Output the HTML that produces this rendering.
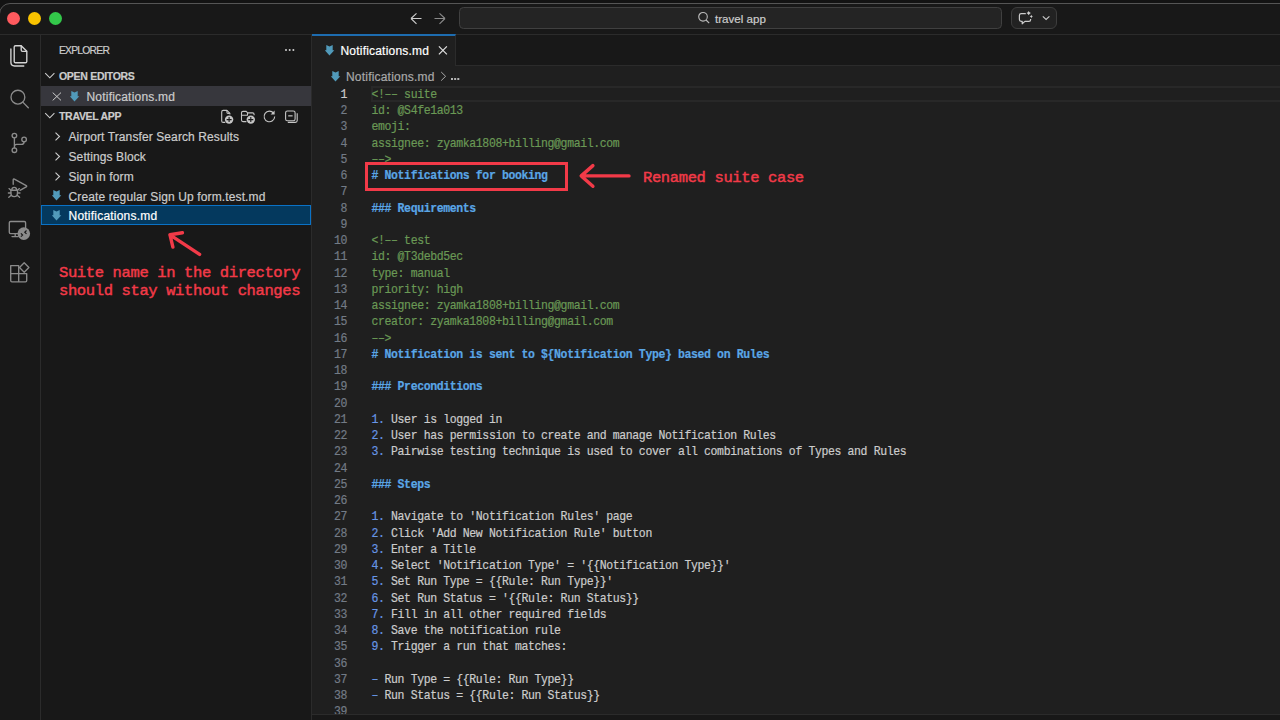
<!DOCTYPE html>
<html><head><meta charset="utf-8">
<style>
html,body{margin:0;padding:0;}
body{width:1280px;height:720px;overflow:hidden;position:relative;background:#131313;font-family:"Liberation Sans",sans-serif;}
.abs{position:absolute;}
svg{display:block;}
#win{position:absolute;left:-1px;top:3px;width:1300px;height:760px;background:#181818;border:1px solid #555555;border-radius:11px;box-sizing:border-box;}
.ln{position:absolute;left:300px;width:47.10px;text-align:right;font-family:"Liberation Mono",monospace;font-size:11.5px;letter-spacing:-0.380px;line-height:16.25px;color:#737b86;white-space:pre;-webkit-text-stroke:0.18px;transform:scaleY(1.07);transform-origin:0 11.19px;margin-top:0.81px;}
.ln.act{color:#cccccc;}
.cl{position:absolute;left:371.5px;font-family:"Liberation Mono",monospace;font-size:11.5px;letter-spacing:-0.380px;line-height:16.25px;color:#cccccc;white-space:pre;-webkit-text-stroke:0.18px;transform:scaleY(1.13);transform-origin:0 11.19px;margin-top:0.81px;}
.hd{color:#5aa6e6;font-weight:bold;}
.ui{position:absolute;white-space:nowrap;color:#cccccc;font-size:12px;line-height:20px;-webkit-text-stroke:0.2px;}
.ann{position:absolute;white-space:pre;font-family:"Liberation Mono",monospace;font-weight:normal;-webkit-text-stroke:0.45px #f23a48;color:#f23a48;font-size:15.5px;letter-spacing:-0.37px;}
</style></head><body>
<div id="win"></div>
<!-- title bar -->

<div class="abs" style="left:7.25px;top:11.6px;width:13px;height:13px;border-radius:50%;background:#ff5a5e"></div>
<div class="abs" style="left:28px;top:11.6px;width:13px;height:13px;border-radius:50%;background:#f9c300"></div>
<div class="abs" style="left:48.8px;top:11.6px;width:13px;height:13px;border-radius:50%;background:#33c84a"></div>
<svg class="abs" style="left:405px;top:10px" width="45" height="18" viewBox="0 0 45 18">
 <path d="M6 8.5 L16.5 8.5 M6 8.5 L11.5 3.3 M6 8.5 L11.5 13.8" stroke="#cccccc" stroke-width="1.1" fill="none"/>
 <path d="M29.5 8.5 L40 8.5 M40 8.5 L34.5 3.3 M40 8.5 L34.5 13.8" stroke="#8a8a8a" stroke-width="1.1" fill="none"/>
</svg>
<div class="abs" style="left:459px;top:7px;width:543px;height:22px;box-sizing:border-box;border:1px solid #404040;border-radius:4.5px;background:#242424"></div>
<svg class="abs" style="left:697px;top:11px" width="14" height="14" viewBox="0 0 14 14"><circle cx="6" cy="5.8" r="4.3" stroke="#bbbbbb" stroke-width="1.1" fill="none"/><path d="M9.1 9 L12.2 12.2" stroke="#bbbbbb" stroke-width="1.1"/></svg>
<div class="ui" style="left:715px;top:9px;font-size:11.6px;color:#cccccc">travel app</div>
<div class="abs" style="left:1011px;top:7px;width:45.5px;height:22px;box-sizing:border-box;border:1px solid #3d3d3d;border-radius:6px;background:#222222"></div>
<svg class="abs" style="left:1000px;top:0" width="60" height="34" viewBox="1000 0 60 34">
 <path d="M1025.8 13.6 L1021.2 13.6 Q1019.4 13.6 1019.4 15.4 L1019.4 19.6 Q1019.4 21.4 1021.2 21.4 L1022.2 21.4 L1022.2 23.8 L1024.9 21.4 L1028.9 21.4 Q1030.6 21.4 1030.6 19.7 L1030.6 19" stroke="#cccccc" stroke-width="1.2" fill="none" stroke-linejoin="round"/>
 <path d="M1028.7 10.9 L1029.5 12.3 L1030.9 13.1 L1029.5 13.9 L1028.7 15.3 L1027.9 13.9 L1026.5 13.1 L1027.9 12.3 Z" fill="#d0d0d0"/>
 <path d="M1031.3 14.8 L1031.9 15.9 L1033 16.5 L1031.9 17.1 L1031.3 18.2 L1030.7 17.1 L1029.6 16.5 L1030.7 15.9 Z" fill="#d0d0d0"/>
 <path d="M1042.8 16.3 L1046.1 19.4 L1049.4 16.3" stroke="#cccccc" stroke-width="1.1" fill="none"/>
</svg>

<!-- activity bar -->
<div class="abs" style="left:40px;top:34px;width:1px;height:686px;background:#2b2b2b"></div>
<!-- sidebar border -->
<div class="abs" style="left:311px;top:34px;width:1px;height:686px;background:#2b2b2b"></div>


<!-- activity icons -->
<svg class="abs" style="left:0;top:34px" width="40" height="260" viewBox="0 34 40 260">
 <g fill="none" stroke-width="1.35" stroke-linejoin="round" stroke-linecap="round">
  <g stroke="#d4d4d4">
   <path d="M14.2 47 Q14.2 45.7 15.5 45.7 L21.2 45.7 L26.8 51.3 L26.8 61.4 Q26.8 62.7 25.5 62.7 L15.5 62.7 Q14.2 62.7 14.2 61.4 Z"/>
   <path d="M21.2 45.9 L21.2 50 Q21.2 51.3 22.5 51.3 L26.6 51.3"/>
   <path d="M10.9 49 L10.9 62.3 Q10.9 66 14.6 66 L23.8 66"/>
  </g>
  <g stroke="#8b8b8b">
   <circle cx="17.9" cy="97.2" r="6.9"/>
   <path d="M22.8 102.1 L28.3 107.8"/>
   <circle cx="14.4" cy="135.6" r="2.3"/>
   <circle cx="14.4" cy="150.2" r="2.3"/>
   <circle cx="24.1" cy="139.4" r="2.3"/>
   <path d="M14.4 137.9 L14.4 147.9 M24.1 141.7 Q24.1 144.4 21.4 144.4 L16.5 144.4 Q14.4 144.4 14.4 146.6"/>
   <path d="M13.2 184.2 L13.2 179.9 Q13.2 178.6 14.4 179.2 L26.2 185.7 Q27.2 186.3 26.2 186.9 L20 190.3"/>
   <path d="M11.9 189.6 Q11.9 187.4 14.2 187.4 Q16.5 187.4 16.5 189.6"/>
   <path d="M10.9 190.2 L17.5 190.2 L17.5 193 Q17.5 196.6 14.2 196.6 Q10.9 196.6 10.9 193 Z"/>
   <path d="M10.9 193 L8.4 193 M17.5 193 L20 193 M11.2 195.3 L8.8 197.3 M17.2 195.3 L19.6 197.3 M10.9 190.3 L9 188.6 M17.5 190.3 L19.4 188.6"/>
   <path d="M18.8 233.6 L10.6 233.6 Q9.3 233.6 9.3 232.3 L9.3 222.8 Q9.3 221.5 10.6 221.5 L24.3 221.5 Q25.6 221.5 25.6 222.8 L25.6 227.4"/>
   <path d="M15.2 233.8 L15.2 236.4 M12 236.6 L18.2 236.6"/>
   <path d="M10.7 265.6 L18.7 265.6 L18.7 281.8 L11.9 281.8 Q10.7 281.8 10.7 280.6 Z M10.7 273.6 L26.7 273.6 L26.7 280.6 Q26.7 281.8 25.5 281.8 L18.7 281.8"/>
   <path d="M24.2 262.8 L28.9 267.5 L24.2 272.2 L19.5 267.5 Z"/>
  </g>
 </g>
 <circle cx="23.8" cy="233.6" r="6.3" fill="#8b8b8b"/>
 <path d="M20.9 233.3 L22.6 235 L20.9 236.7 M26.5 230.5 L24.8 232.2 L26.5 233.9" stroke="#181818" stroke-width="1.2" fill="none"/>
</svg>
<!-- explorer toolbar icons -->
<svg class="abs" style="left:210px;top:100px" width="100" height="30" viewBox="210 100 100 30">
 <g fill="none" stroke="#c5c5c5" stroke-width="1.1" stroke-linejoin="round">
  <path d="M225.3 122.4 L223.2 122.4 Q221.7 122.4 221.7 120.9 L221.7 111.9 Q221.7 110.4 223.2 110.4 L226.9 110.4 L229.9 113.4 L229.9 114.6"/>
  <path d="M226.9 110.6 L226.9 112.3 Q226.9 113.4 228 113.4 L229.8 113.4"/>
  <path d="M246.4 121.6 L243 121.6 Q241.5 121.6 241.5 120.1 L241.5 112.8 Q241.5 111.4 243 111.4 L246.2 111.4 L247.6 112.9 L252.6 112.9 Q254.1 112.9 254.1 114.4 L254.1 115.2"/>
  <path d="M241.6 115.3 L247.5 115.3 L247.6 112.9"/>
  <path d="M273.6 113.2 A5.3 5.3 0 1 0 274.7 116.6"/>
  <rect x="285.6" y="111" width="9.5" height="9.7" rx="1.8"/>
  <path d="M297.2 113.3 L297.2 120.6 Q297.2 122.4 295.4 122.4 L287.8 122.4"/>
  <path d="M288.2 115.85 L292.6 115.85" stroke-width="1.2"/>
 </g>
 <path d="M274.6 110.6 L274.6 114.6 L270.6 114.6 Z" fill="#c5c5c5"/>
 <circle cx="229.1" cy="119.6" r="4.2" fill="#c5c5c5"/>
 <circle cx="250.8" cy="119.6" r="4.2" fill="#c5c5c5"/>
 <path d="M229.1 117.1 L229.1 122.1 M226.6 119.6 L231.6 119.6 M250.8 117.1 L250.8 122.1 M248.3 119.6 L253.3 119.6" stroke="#181818" stroke-width="1.1"/>
</svg>

<!-- sidebar -->
<div class="ui" style="left:59px;top:40.5px;font-size:10.3px;letter-spacing:-0.75px">EXPLORER</div>
<div class="abs" style="left:285.3px;top:49.2px;width:2px;height:2px;background:#d0d0d0;border-radius:1px;box-shadow:3.7px 0 0 #d0d0d0,7.4px 0 0 #d0d0d0"></div>

<svg class="abs" style="left:44px;top:71px" width="12" height="10" viewBox="0 0 12 10"><path d="M1.2 2.2 L5.8 6.8 L10.4 2.2" stroke="#cccccc" stroke-width="1.1" fill="none"/></svg>
<div class="ui" style="left:59px;top:66px;font-size:10.5px;font-weight:bold;letter-spacing:-0.3px">OPEN EDITORS</div>
<div class="abs" style="left:41px;top:86px;width:270px;height:20px;background:#37373d"></div>
<svg class="abs" style="left:52px;top:92px" width="10" height="9" viewBox="0 0 10 9"><path d="M0.7 0.6 L9 8.4 M9 0.6 L0.7 8.4" stroke="#cccccc" stroke-width="1" fill="none"/></svg>
<div class="abs" style="left:70px;top:90.5px"><svg width="10" height="11" viewBox="0 0 10 11"><path d="M1.3 0 L4.5 1.5 L7.7 0 L7.7 5.2 L9.3 5.2 L4.5 10.4 L-0.3 5.2 L1.3 5.2 Z" fill="#519aba"/></svg></div>
<div class="ui" style="left:86.5px;top:86.5px;letter-spacing:0.2px">Notifications.md</div>

<svg class="abs" style="left:44px;top:111px" width="12" height="10" viewBox="0 0 12 10"><path d="M1.2 2.2 L5.8 6.8 L10.4 2.2" stroke="#cccccc" stroke-width="1.1" fill="none"/></svg>
<div class="ui" style="left:59px;top:106px;font-size:10.5px;font-weight:bold;letter-spacing:-0.3px">TRAVEL APP</div>

<div class="ui" style="left:68.5px;top:126.6px;letter-spacing:0.1px">Airport Transfer Search Results</div>
<div class="ui" style="left:68.5px;top:146.6px;letter-spacing:0.1px">Settings Block</div>
<div class="ui" style="left:68.5px;top:166.6px;letter-spacing:0.1px">Sign in form</div>
<div class="ui" style="left:68.5px;top:186.6px;letter-spacing:0.12px">Create regular Sign Up form.test.md</div>
<svg class="abs" style="left:52px;top:130px" width="12" height="60" viewBox="0 0 12 60">
 <path d="M3.5 2.6 L7.5 6.5 L3.5 10.4 M3.5 22.6 L7.5 26.5 L3.5 30.4 M3.5 42.6 L7.5 46.5 L3.5 50.4" stroke="#cccccc" stroke-width="1.1" fill="none"/>
</svg>
<div class="abs" style="left:52px;top:190px"><svg width="10" height="11" viewBox="0 0 10 11"><path d="M1.3 0 L4.5 1.5 L7.7 0 L7.7 5.2 L9.3 5.2 L4.5 10.4 L-0.3 5.2 L1.3 5.2 Z" fill="#519aba"/></svg></div>
<div class="abs" style="left:41px;top:205px;width:270px;height:20px;box-sizing:border-box;background:#04395e;border:1px solid #0a72c6"></div>
<div class="abs" style="left:52px;top:209.5px"><svg width="10" height="11" viewBox="0 0 10 11"><path d="M1.3 0 L4.5 1.5 L7.7 0 L7.7 5.2 L9.3 5.2 L4.5 10.4 L-0.3 5.2 L1.3 5.2 Z" fill="#519aba"/></svg></div>
<div class="ui" style="left:68.5px;top:205.6px;letter-spacing:0.22px;color:#ffffff">Notifications.md</div>

<!-- editor -->
<div class="abs" style="left:312px;top:34px;width:968px;height:680px;background:#1f1f1f"></div>
<div class="abs" style="left:0;top:33.6px;width:1280px;height:1px;background:#2b2b2b"></div>
<div class="abs" style="left:312px;top:34.6px;width:968px;background:#181818;border-bottom:1px solid #2b2b2b;box-sizing:border-box;height:31.4px"></div>
<div class="abs" style="left:312px;top:34px;width:144px;height:32px;background:#1f1f1f;border-top:2px solid #1d6cb0;border-right:1px solid #2b2b2b;box-sizing:border-box"></div>
<div class="abs" style="left:325px;top:45px"><svg width="10" height="11" viewBox="0 0 10 11"><path d="M1.3 0 L4.5 1.5 L7.7 0 L7.7 5.2 L9.3 5.2 L4.5 10.4 L-0.3 5.2 L1.3 5.2 Z" fill="#519aba"/></svg></div>
<div class="ui" style="left:340.5px;top:40.5px;color:#ffffff;letter-spacing:0.2px">Notifications.md</div>
<svg class="abs" style="left:438px;top:46px" width="10" height="9" viewBox="0 0 10 9"><path d="M0.9 0.4 L8.9 8.4 M8.9 0.4 L0.9 8.4" stroke="#e0e0e0" stroke-width="1.2" fill="none"/></svg>
<div class="abs" style="left:330.5px;top:71px"><svg width="10" height="11" viewBox="0 0 10 11"><path d="M1.3 0 L4.5 1.5 L7.7 0 L7.7 5.2 L9.3 5.2 L4.5 10.4 L-0.3 5.2 L1.3 5.2 Z" fill="#519aba"/></svg></div>
<div class="ui" style="left:346px;top:66.5px;color:#a9a9a9;letter-spacing:0.2px">Notifications.md</div>
<svg class="abs" style="left:440px;top:71px" width="8" height="11" viewBox="0 0 8 11"><path d="M1.2 1 L5.6 5.3 L1.2 9.6" stroke="#a9a9a9" stroke-width="1" fill="none"/></svg>
<div class="abs" style="left:451px;top:78.3px;width:2px;height:2px;background:#b5b5b5;box-shadow:3.15px 0 0 #b5b5b5,6.3px 0 0 #b5b5b5"></div>

<div class="abs" style="left:371px;top:86px;width:909px;height:16px;box-sizing:border-box;border:2px solid #282828;border-right:none"></div>
<div class="ln act" style="top:86.00px">1</div>
<div class="cl" style="top:86.00px"><span style="color:#6a9955">&lt;!–– suite</span></div>
<div class="ln" style="top:102.25px">2</div>
<div class="cl" style="top:102.25px"><span style="color:#6a9955">id: @S4fe1a013</span></div>
<div class="ln" style="top:118.50px">3</div>
<div class="cl" style="top:118.50px"><span style="color:#6a9955">emoji:</span></div>
<div class="ln" style="top:134.75px">4</div>
<div class="cl" style="top:134.75px"><span style="color:#6a9955">assignee: zyamka1808+billing@gmail.com</span></div>
<div class="ln" style="top:151.00px">5</div>
<div class="cl" style="top:151.00px"><span style="color:#6a9955">––&gt;</span></div>
<div class="ln" style="top:167.25px">6</div>
<div class="cl" style="top:167.25px"><span class="hd"># Notifications for booking</span></div>
<div class="ln" style="top:183.50px">7</div>
<div class="ln" style="top:199.75px">8</div>
<div class="cl" style="top:199.75px"><span class="hd">### Requirements</span></div>
<div class="ln" style="top:216.00px">9</div>
<div class="ln" style="top:232.25px">10</div>
<div class="cl" style="top:232.25px"><span style="color:#6a9955">&lt;!–– test</span></div>
<div class="ln" style="top:248.50px">11</div>
<div class="cl" style="top:248.50px"><span style="color:#6a9955">id: @T3debd5ec</span></div>
<div class="ln" style="top:264.75px">12</div>
<div class="cl" style="top:264.75px"><span style="color:#6a9955">type: manual</span></div>
<div class="ln" style="top:281.00px">13</div>
<div class="cl" style="top:281.00px"><span style="color:#6a9955">priority: high</span></div>
<div class="ln" style="top:297.25px">14</div>
<div class="cl" style="top:297.25px"><span style="color:#6a9955">assignee: zyamka1808+billing@gmail.com</span></div>
<div class="ln" style="top:313.50px">15</div>
<div class="cl" style="top:313.50px"><span style="color:#6a9955">creator: zyamka1808+billing@gmail.com</span></div>
<div class="ln" style="top:329.75px">16</div>
<div class="cl" style="top:329.75px"><span style="color:#6a9955">––&gt;</span></div>
<div class="ln" style="top:346.00px">17</div>
<div class="cl" style="top:346.00px"><span class="hd"># Notification is sent to ${Notification Type} based on Rules</span></div>
<div class="ln" style="top:362.25px">18</div>
<div class="ln" style="top:378.50px">19</div>
<div class="cl" style="top:378.50px"><span class="hd">### Preconditions</span></div>
<div class="ln" style="top:394.75px">20</div>
<div class="ln" style="top:411.00px">21</div>
<div class="cl" style="top:411.00px"><span style="color:#6796e6">1.</span> User is logged in</div>
<div class="ln" style="top:427.25px">22</div>
<div class="cl" style="top:427.25px"><span style="color:#6796e6">2.</span> User has permission to create and manage Notification Rules</div>
<div class="ln" style="top:443.50px">23</div>
<div class="cl" style="top:443.50px"><span style="color:#6796e6">3.</span> Pairwise testing technique is used to cover all combinations of Types and Rules</div>
<div class="ln" style="top:459.75px">24</div>
<div class="ln" style="top:476.00px">25</div>
<div class="cl" style="top:476.00px"><span class="hd">### Steps</span></div>
<div class="ln" style="top:492.25px">26</div>
<div class="ln" style="top:508.50px">27</div>
<div class="cl" style="top:508.50px"><span style="color:#6796e6">1.</span> Navigate to 'Notification Rules' page</div>
<div class="ln" style="top:524.75px">28</div>
<div class="cl" style="top:524.75px"><span style="color:#6796e6">2.</span> Click 'Add New Notification Rule' button</div>
<div class="ln" style="top:541.00px">29</div>
<div class="cl" style="top:541.00px"><span style="color:#6796e6">3.</span> Enter a Title</div>
<div class="ln" style="top:557.25px">30</div>
<div class="cl" style="top:557.25px"><span style="color:#6796e6">4.</span> Select 'Notification Type' = '{{Notification Type}}'</div>
<div class="ln" style="top:573.50px">31</div>
<div class="cl" style="top:573.50px"><span style="color:#6796e6">5.</span> Set Run Type = {{Rule: Run Type}}'</div>
<div class="ln" style="top:589.75px">32</div>
<div class="cl" style="top:589.75px"><span style="color:#6796e6">6.</span> Set Run Status = '{{Rule: Run Status}}</div>
<div class="ln" style="top:606.00px">33</div>
<div class="cl" style="top:606.00px"><span style="color:#6796e6">7.</span> Fill in all other required fields</div>
<div class="ln" style="top:622.25px">34</div>
<div class="cl" style="top:622.25px"><span style="color:#6796e6">8.</span> Save the notification rule</div>
<div class="ln" style="top:638.50px">35</div>
<div class="cl" style="top:638.50px"><span style="color:#6796e6">9.</span> Trigger a run that matches:</div>
<div class="ln" style="top:654.75px">36</div>
<div class="ln" style="top:671.00px">37</div>
<div class="cl" style="top:671.00px"><span style="color:#6796e6">–</span> Run Type = {{Rule: Run Type}}</div>
<div class="ln" style="top:687.25px">38</div>
<div class="cl" style="top:687.25px"><span style="color:#6796e6">–</span> Run Status = {{Rule: Run Status}}</div>
<div class="ln" style="top:703.50px">39</div>
<div class="abs" style="left:312px;top:714px;width:968px;height:6px;background:#181818;border-top:1px solid #2b2b2b"></div>

<!-- annotations -->
<div class="abs" style="left:364.5px;top:162px;width:203.5px;height:28.5px;box-sizing:border-box;border:3px solid #f23a48"></div>
<svg class="abs" style="left:0;top:0" width="1280" height="720" viewBox="0 0 1280 720">
 <g stroke="#f23a48" stroke-width="3.4" stroke-linecap="round" stroke-linejoin="round" fill="none">
  <path d="M199.6 254.4 L170 234.8 M182.4 232.8 L170 234.8 L172.9 247.1"/>
  <path d="M629 175.9 L581.2 175.9 M592.9 165.6 L581.2 175.9 L592.9 186.3"/>
 </g>
</svg>
<div class="ann" style="left:59px;top:264.2px;line-height:18px">Suite name in the directory
should stay without changes</div>
<div class="ann" style="left:643px;top:168.9px;line-height:18px">Renamed suite case</div>
</body></html>
